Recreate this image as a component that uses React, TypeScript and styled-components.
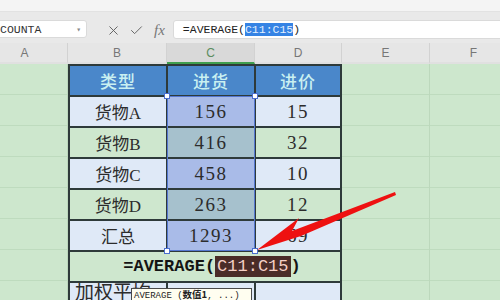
import * as React from "react";
import styled, { createGlobalStyle } from "styled-components";
import { X, Check } from "lucide-react";

const GlobalStyle = createGlobalStyle`
  html, body {
    margin: 0;
    padding: 0;
    overflow: hidden;
    background: #cde7cd;
  }
  body {
    font-family: "Liberation Sans", "Noto Sans CJK SC", sans-serif;
  }
`;

const Frame = styled.div`
  position: relative;
  width: 500px;
  height: 300px;
  overflow: hidden;
  display: flex;
  flex-direction: column;
`;

const TopStrip = styled.div`
  flex: 0 0 11px;
  background: #f4f4f4;
  border-bottom: 1px solid #e2e2e2;
`;

const Toolbar = styled.div`
  flex: 0 0 31px;
  background: #e9e9e9;
  display: flex;
  align-items: flex-start;
  padding-top: 8px;
  box-sizing: border-box;
`;

const NameBox = styled.div`
  width: 97px;
  height: 18px;
  margin-left: -10px;
  box-sizing: border-box;
  background: #fff;
  border: 1px solid #dadada;
  border-radius: 3px;
  display: flex;
  align-items: center;
  padding-left: 9px;
  font-family: "Liberation Mono", monospace;
  font-size: 11.5px;
  color: #333;
`;

const Caret = styled.span`
  margin-left: auto;
  margin-right: 5px;
  font-size: 8px;
  color: #888;
`;

const ActionIcons = styled.div`
  display: flex;
  align-items: center;
  gap: 8px;
  height: 20px;
  margin-left: 19px;
  color: #5f5f5f;
`;

const Fx = styled.span`
  font-family: "Liberation Serif", serif;
  font-style: italic;
  font-size: 15px;
  color: #777;
  margin-left: 2px;
`;

const FormulaBox = styled.div`
  flex: 1;
  margin-left: 8px;
  margin-right: -4px;
  height: 19px;
  box-sizing: border-box;
  background: #fff;
  border: 1px solid #dadada;
  border-radius: 3px;
  display: flex;
  align-items: center;
  padding-left: 9px;
  font-family: "Liberation Mono", monospace;
  font-size: 11.5px;
  color: #222;
`;

const SelectedText = styled.span`
  background: #3583e4;
  color: #e3f0ff;
`;

const ColumnHeaderRow = styled.div`
  flex: 0 0 21px;
  display: flex;
  margin-left: -18px;
  background: #e6e6e6;
`;

const ColumnHeader = styled.div<{ $w: number; $active?: boolean }>`
  width: ${(p) => p.$w}px;
  flex: 0 0 auto;
  box-sizing: border-box;
  display: flex;
  align-items: center;
  justify-content: center;
  font-size: 12px;
  color: ${(p) => (p.$active ? "#5b8d5f" : "#777")};
  background: ${(p) => (p.$active ? "#d9d9d9" : "#e6e6e6")};
  border-right: 1px solid #d2d2d2;
  border-bottom: 2px solid ${(p) => (p.$active ? "#3f9e4e" : "#e0e0e0")};
`;

const Sheet = styled.div`
  flex: 1 1 auto;
  min-height: 0;
  display: flex;
  margin-left: -18px;
`;

const GreenColumn = styled.div<{ $w: number }>`
  width: ${(p) => p.$w}px;
  flex: 0 0 auto;
  box-sizing: border-box;
  background-color: #cde7cd;
  background-image: linear-gradient(
    to bottom,
    transparent 0 30px,
    #bedbbe 30px 31px
  );
  background-size: 100% 31px;
  border-right: 1px solid #bcd8bc;
`;

const Table = styled.div`
  position: relative;
  align-self: flex-start;
  width: 274px;
  flex: 0 0 auto;
  box-sizing: border-box;
  display: grid;
  grid-template-columns: 96px 86px 84px;
  grid-auto-rows: 29px;
  gap: 2px;
  padding: 2px;
  background: #2e3a3a;
`;

const HeadCell = styled.div`
  background: #4a87ca;
  color: #c9f0f1;
  display: flex;
  align-items: center;
  justify-content: center;
  font-family: "Noto Sans CJK SC", sans-serif;
  font-size: 17px;
  font-weight: 500;
  letter-spacing: 1px;
`;

const tones = {
  light: "#dfe9f7",
  green: "#cee7ce",
  selBlue: "#a9bbe8",
  selTeal: "#a6c1cd",
};

const Cell = styled.div<{ $tone: keyof typeof tones; $num?: boolean; $left?: boolean }>`
  background: ${(p) => tones[p.$tone]};
  display: flex;
  align-items: ${(p) => (p.$left ? "flex-start" : "center")};
  justify-content: ${(p) => (p.$left ? "flex-start" : "center")};
  padding-left: ${(p) => (p.$left ? "5px" : "0")};
  padding-top: ${(p) => (p.$left ? "1px" : "0")};
  overflow: hidden;
  white-space: nowrap;
  color: #2c2c2c;
  font-family: "Liberation Serif", "Noto Sans CJK SC", serif;
  font-size: ${(p) => (p.$num ? "19px" : p.$left ? "19px" : "17px")};
  line-height: ${(p) => (p.$left ? "17px" : "normal")};
  letter-spacing: ${(p) => (p.$num ? "1.5px" : "0")};
`;

const FormulaCell = styled.div`
  grid-column: 1 / -1;
  background: #cee7ce;
  display: flex;
  align-items: center;
  justify-content: center;
  padding-left: 14px;
  font-family: "Liberation Mono", monospace;
  font-size: 17px;
  font-weight: bold;
  color: #141414;
`;

const RefChip = styled.span`
  background: #4a2c28;
  color: #f4cfc6;
  font-weight: normal;
  padding: 1px 2px;
`;

const Selection = styled.div`
  position: absolute;
  left: 99px;
  top: 32px;
  width: 88px;
  height: 155px;
  box-sizing: border-box;
  border: 1px solid #5577cf;
  pointer-events: none;
`;

const Handle = styled.span<{ $x: "l" | "r"; $y: "t" | "b" }>`
  position: absolute;
  width: 4px;
  height: 4px;
  background: #fff;
  border: 1px solid #4b6fcf;
  ${(p) => (p.$x === "l" ? "left: -4px;" : "right: -4px;")}
  ${(p) => (p.$y === "t" ? "top: -4px;" : "bottom: -4px;")}
`;

const Tooltip = styled.div`
  position: absolute;
  left: 131px;
  top: 288px;
  width: 121px;
  height: 12px;
  box-sizing: border-box;
  background: #fffef0;
  border: 1px solid #4a4a4a;
  border-bottom: none;
  padding: 0 2px;
  font-family: "Liberation Mono", "Noto Sans CJK SC", monospace;
  font-size: 9px;
  line-height: 11px;
  color: #222;
  white-space: nowrap;
  overflow: hidden;

  b {
    font-family: "Noto Sans CJK SC", sans-serif;
    font-size: 9.5px;
  }
`;

const Overlay = styled.svg`
  position: absolute;
  left: 0;
  top: 0;
  pointer-events: none;
`;

const rows = [
  { name: "货物A", qty: "156", price: "15", band: "light" as const },
  { name: "货物B", qty: "416", price: "32", band: "green" as const },
  { name: "货物C", qty: "458", price: "10", band: "light" as const },
  { name: "货物D", qty: "263", price: "12", band: "green" as const },
  { name: "汇总", qty: "1293", price: "69", band: "light" as const },
];

const App = () => {
  return (
    <Frame>
      <GlobalStyle />
      <TopStrip />
      <Toolbar>
        <NameBox>
          COUNTA
          <Caret>▾</Caret>
        </NameBox>
        <ActionIcons>
          <X size={15} strokeWidth={1.5} />
          <Check size={15} strokeWidth={1.5} />
          <Fx>fx</Fx>
        </ActionIcons>
        <FormulaBox>
          =AVERAGE(<SelectedText>C11:C15</SelectedText>)
        </FormulaBox>
      </Toolbar>
      <ColumnHeaderRow>
        <ColumnHeader $w={86}>A</ColumnHeader>
        <ColumnHeader $w={99}>B</ColumnHeader>
        <ColumnHeader $w={88} $active>
          C
        </ColumnHeader>
        <ColumnHeader $w={87}>D</ColumnHeader>
        <ColumnHeader $w={88}>E</ColumnHeader>
        <ColumnHeader $w={88}>F</ColumnHeader>
      </ColumnHeaderRow>
      <Sheet>
        <GreenColumn $w={86} />
        <Table>
          <HeadCell>类型</HeadCell>
          <HeadCell>进货</HeadCell>
          <HeadCell>进价</HeadCell>
          {rows.map((r) => (
            <React.Fragment key={r.name}>
              <Cell $tone={r.band}>{r.name}</Cell>
              <Cell $tone={r.band === "light" ? "selBlue" : "selTeal"} $num>
                {r.qty}
              </Cell>
              <Cell $tone={r.band} $num>
                {r.price}
              </Cell>
            </React.Fragment>
          ))}
          <FormulaCell>
            =AVERAGE(<RefChip>C11:C15</RefChip>)
          </FormulaCell>
          <Cell $tone="light" $left>
            加权平均
          </Cell>
          <Cell $tone="light" />
          <Cell $tone="light" />
          <Selection>
            <Handle $x="l" $y="t" />
            <Handle $x="r" $y="t" />
            <Handle $x="l" $y="b" />
            <Handle $x="r" $y="b" />
          </Selection>
        </Table>
        <GreenColumn $w={88} />
        <GreenColumn $w={88} />
      </Sheet>
      <Tooltip>
        AVERAGE (<b>数值1</b>, ...)
      </Tooltip>
      <Overlay width={500} height={300} viewBox="0 0 500 300">
        <polygon
          points="257,250 299,218 292,231 395,192 396,195 301,236"
          fill="#ee1111"
        />
      </Overlay>
    </Frame>
  );
};

export default App;
